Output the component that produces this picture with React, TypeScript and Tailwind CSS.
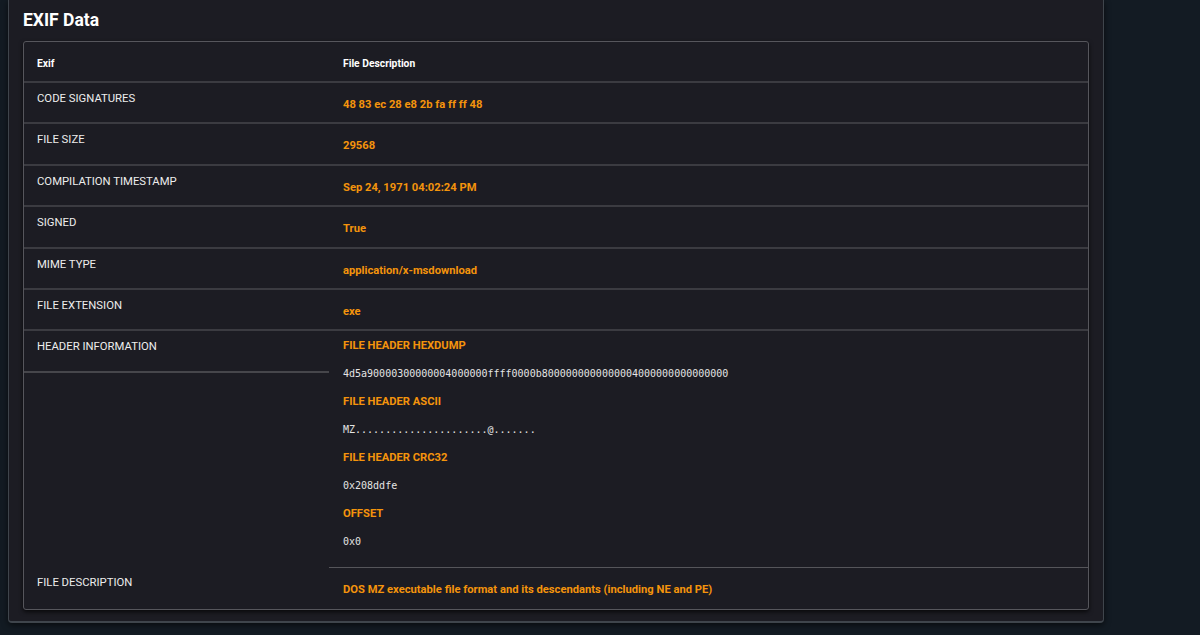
import React from 'react'

const rows = [
  { label: 'CODE SIGNATURES', value: '48 83 ec 28 e8 2b fa ff ff 48' },
  { label: 'FILE SIZE', value: '29568' },
  { label: 'COMPILATION TIMESTAMP', value: 'Sep 24, 1971 04:02:24 PM' },
  { label: 'SIGNED', value: 'True' },
  { label: 'MIME TYPE', value: 'application/x-msdownload' },
  { label: 'FILE EXTENSION', value: 'exe' },
]

const header = [
  { title: 'FILE HEADER HEXDUMP', value: '4d5a90000300000004000000ffff0000b800000000000000400000000000000000'.slice(0, 64) },
  { title: 'FILE HEADER ASCII', value: 'MZ......................@.......' },
  { title: 'FILE HEADER CRC32', value: '0x208ddfe' },
  { title: 'OFFSET', value: '0x0' },
]

export default function App() {
  return (
    <div className="w-[1200px] h-[635px] bg-[#131b23] overflow-hidden font-['Roboto',sans-serif]">
      <div className="ml-2 w-[1096px] h-[623px] bg-[#1c1c23] border-x border-b-2 border-[#3f454c] rounded-b shadow-[0_2px_6px_rgba(0,0,0,0.6)] px-[14px] pt-[8px]">
        <h2 className="text-[17.5px] leading-6 font-bold text-white">EXIF Data</h2>

        {/* Table */}
        <div className="mt-[9px] w-[1066px] border border-[#56565c] rounded-[3px] shadow-[0_2px_4px_rgba(0,0,0,0.7)] bg-[#1c1c23]">
          <div className="grid grid-cols-[305px_1fr] h-[41px] border-b-2 border-[#3b3b41] text-[10.3px] font-bold text-white">
            <div className="pl-[13px] pt-[14px]">Exif</div>
            <div className="pl-[14px] pt-[14px]">File Description</div>
          </div>

          {rows.map(r => (
            <div key={r.label} className="grid grid-cols-[305px_1fr] h-[41.4px] border-b-2 border-[#3b3b41]">
              <div className="pl-[13px] pt-[8px] text-[11.3px] text-[#ededed]">{r.label}</div>
              <div className="pl-[14px] pt-[14px] text-[11.2px] font-bold text-[#f4940c]">{r.value}</div>
            </div>
          ))}

          <div className="grid grid-cols-[305px_1fr]">
            <div className="flex flex-col justify-between">
              <div className="h-[42px] border-b-2 border-[#46464b] pl-[13px] pt-[8px] text-[11.3px] text-[#ededed]">HEADER INFORMATION</div>
              <div className="h-[42px] pl-[13px] pt-[8px] text-[11.3px] text-[#ededed]">FILE DESCRIPTION</div>
            </div>
            <div>
              <div className="pl-[14px] pt-[5px] pb-[7px] flex flex-col">
                {header.map(h => (
                  <React.Fragment key={h.title}>
                    <div className="h-[28px] pt-[2px] text-[11.2px] font-bold text-[#f4940c]">{h.title}</div>
                    <div className="h-[28px] pt-[2px] font-['DejaVu_Sans_Mono',monospace] text-[10px] text-[#e4e4e4]">{h.value}</div>
                  </React.Fragment>
                ))}
              </div>
              <div className="h-[42px] border-t border-[#55555a] pl-[14px] pt-[14px] text-[11.2px] font-bold text-[#f4940c]">
                DOS MZ executable file format and its descendants (including NE and PE)
              </div>
            </div>
          </div>
        </div>
      </div>
    </div>
  )
}
